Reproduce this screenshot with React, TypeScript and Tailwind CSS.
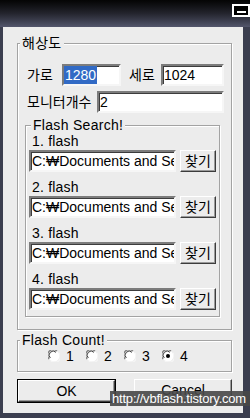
const font = "font-['Liberation_Sans','Noto_Sans_CJK_KR',sans-serif]";

function Field({ children, className = "" }: { children?: React.ReactNode; className?: string }) {
  return (
    <div
      className={`flex h-[22px] items-center overflow-hidden whitespace-nowrap border-2 border-t-[#7c7c7c] border-l-[#7c7c7c] border-b-[#f6f6f6] border-r-[#f6f6f6] bg-white text-[14px] leading-none text-black shadow-[inset_1px_1px_0_#3c3c3c] ${className}`}
    >
      {children}
    </div>
  );
}

function Btn({ label, className = "" }: { label: string; className?: string }) {
  return (
    <div
      className={`flex h-[22px] items-center justify-center border border-t-white border-l-white border-b-[#3c3c3c] border-r-[#3c3c3c] bg-[#ececec] text-[14px] leading-none text-black shadow-[inset_-1px_-1px_0_#9a9a9a] ${className}`}
    >
      {label}
    </div>
  );
}

function Group({ title, className = "", children }: { title: string; className?: string; children: React.ReactNode }) {
  return (
    <div className={`border border-[#a3a3a3] shadow-[inset_1px_1px_0_#fff,1px_1px_0_#fff] ${className}`}>
      <div className="-mt-[9px] ml-[2px] w-fit bg-[#ececec] px-[2px] text-[14px] leading-[16px] tracking-[0.3px]">
        {title}
      </div>
      {children}
    </div>
  );
}

function Radio({ n, checked }: { n: number; checked?: boolean }) {
  return (
    <div className="flex w-[38px] items-center">
      <svg width="12" height="12" viewBox="0 0 12 12">
        <circle cx="6" cy="6" r="5.5" fill="#fff" />
        <path d="M1.2 9 A5.2 5.2 0 0 1 9 1.2" fill="none" stroke="#7c7c7c" strokeWidth="1.2" />
        <path d="M2.3 8 A4 4 0 0 1 8 2.3" fill="none" stroke="#3c3c3c" strokeWidth="1" />
        <path d="M3 10.8 A5.2 5.2 0 0 0 10.8 3" fill="none" stroke="#f6f6f6" strokeWidth="1.2" />
        {checked && <circle cx="6" cy="6" r="2" fill="#000" />}
      </svg>
      <span className="ml-[6px] text-[14px] leading-none">{n}</span>
    </div>
  );
}

const paths = ["1. flash", "2. flash", "3. flash", "4. flash"];

export default function App() {
  return (
    <div className={`relative flex h-[418px] w-[250px] flex-col bg-[#3b3e4f] text-black ${font}`}>
      {/* title bar */}
      <div className="flex h-[27px] shrink-0 items-start justify-end bg-gradient-to-b from-[#050505] via-[#24252e] to-[#53566c]">
        <div className="mt-[4px] flex h-[13px] w-[18px] items-end justify-center border-2 border-white bg-black pb-[2px]">
          <div className="h-[2px] w-[9px] bg-white" />
        </div>
      </div>

      {/* body */}
      <div className="ml-[3px] mr-[7px] flex h-[386px] flex-col bg-[#ececec]">
        <Group title="해상도" className="ml-[14px] mt-[16px] w-[215px] pb-[12px]">
          <div className="mt-[13px] flex items-center pl-[9px] pr-[7px]">
            <span className="w-[28px] text-[14px] leading-none">가로</span>
            <Field className="ml-[7px] w-[59px] pl-0">
              <span className="bg-[#316ac5] px-[1px] py-[3px] text-white">1280</span>
            </Field>
            <span className="ml-[8px] w-[28px] text-[14px] leading-none">세로</span>
            <Field className="ml-[4px] w-[63px] pl-[1px]">1024</Field>
          </div>
          <div className="mt-[5px] flex items-center pl-[9px] pr-[7px]">
            <span className="w-[70px] text-[14px] leading-none">모니터개수</span>
            <Field className="h-[20px] flex-1 pl-[1px]">2</Field>
          </div>

          <Group title="Flash Search!" className="ml-[7px] mt-[12px] w-[195px] pb-[6px] pl-[3px] pr-[3px]">
            {paths.map((p) => (
              <div key={p} className="mb-[7px] last:mb-0">
                <div className="h-[17px] pl-[3px] text-[14px] leading-[16px] tracking-[0.2px]">{p}</div>
                <div className="flex items-center">
                  <Field className="w-[147px] pl-[1px]">C:₩Documents and Se</Field>
                  <Btn label="찾기" className="ml-[4px] w-[36px]" />
                </div>
              </div>
            ))}
          </Group>
        </Group>

        <Group title="Flash Count!" className="ml-[14px] mt-[10px] w-[215px] pb-[7px]">
          <div className="flex h-[16px] items-center pl-[30px]">
            <Radio n={1} />
            <Radio n={2} />
            <Radio n={3} />
            <Radio n={4} checked />
          </div>
        </Group>

        <div className="ml-[14px] mt-[7px] flex gap-[18px]">
          <div className="w-[99px] border border-black">
            <Btn label="OK" className="h-[20px] w-full" />
          </div>
          <Btn label="Cancel" className="w-[98px]" />
        </div>
      </div>

      {/* watermark */}
      <div className="absolute left-[110px] top-[391px] flex h-[15px] w-[140px] items-center overflow-hidden whitespace-nowrap bg-[#484848]/90 pl-[2px] text-[13px] leading-none tracking-[-0.2px] text-white">
        http://vbflash.tistory.com
      </div>
    </div>
  );
}
